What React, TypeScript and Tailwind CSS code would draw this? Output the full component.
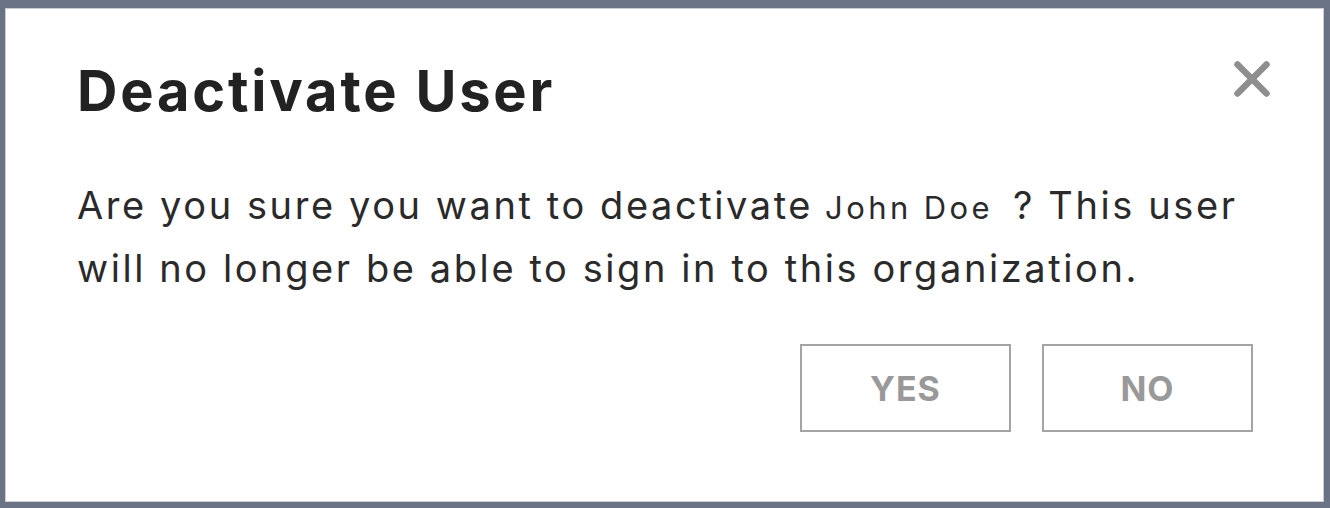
import { X } from "lucide-react";

const DeactivateUserDialog = () => {
  return (
    <div className="w-full h-[494px] bg-white border border-[#c9cdd3] flex flex-col pl-[71px] pr-[70px] pt-[54px] font-['Inter',sans-serif]">
      {/* Header */}
      <div className="flex items-start justify-between">
        <h1 className="text-[56px] leading-none font-bold tracking-[0.05em] text-[#222222]">
          Deactivate User
        </h1>
        <button className="mt-[-13px] mr-[-28px] text-[#8e8e8e]">
          <X size={58} strokeWidth={2.7} />
        </button>
      </div>

      {/* Body */}
      <p className="mt-[56px] text-[38px] leading-[60px] tracking-[0.068em] text-[#2a2a2a]">
        Are you sure you want to deactivate
        <span className="text-[31px] tracking-[0.11em] ml-[12px] mr-[20px]">John Doe</span>
        ? This user will no longer be able to sign in to this organization.
      </p>

      {/* Actions */}
      <div className="mt-[46px] flex justify-end gap-[31px]">
        <button className="w-[211px] h-[88px] border-2 border-[#a4a4a4] text-[34px] font-bold tracking-[0.03em] text-[#999999]">
          YES
        </button>
        <button className="w-[211px] h-[88px] border-2 border-[#a4a4a4] text-[34px] font-bold tracking-[0.03em] text-[#999999]">
          NO
        </button>
      </div>
    </div>
  );
};

export default function App() {
  return (
    <div className="w-[1330px] h-[508px] bg-[#6a7386] pt-[8px] pl-[5px] pr-[6px]">
      <DeactivateUserDialog />
    </div>
  );
}
